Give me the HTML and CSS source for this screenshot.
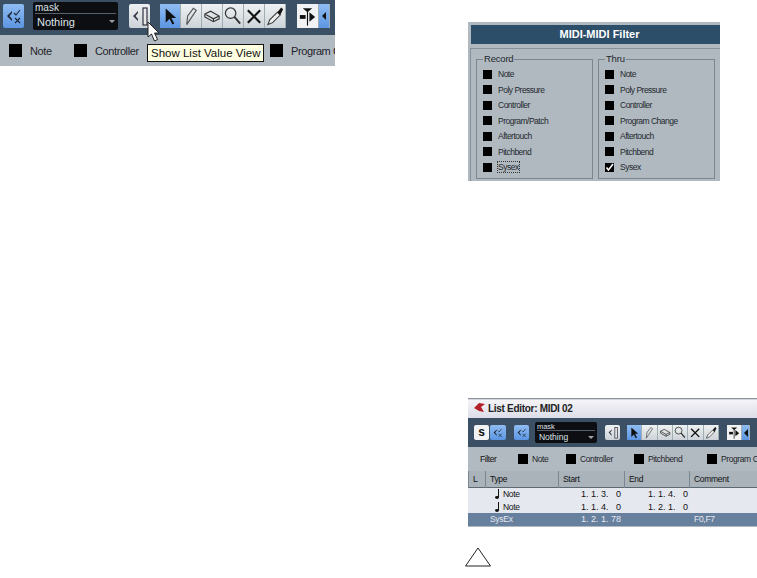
FILE: index.html
```html
<!DOCTYPE html>
<html lang="en">

<head>
    <meta charset="UTF-8">
    <meta name="viewport" content="width=device-width, initial-scale=1.0">
    <title>MIDI Filter</title>
    <link rel="stylesheet" href="styles.css">
</head>

<body>
    <svg class="defs" width="0" height="0">
        <symbol id="i-mute" viewBox="0 0 21 24">
            <path d="M9 7 L4 12 L9 17 L9 15 L6.5 12 L9 9 Z" fill="#1c2530" />
            <path d="M11 9 L13 11 L17 6 M12 14 L17 19 M17 14 L12 19" fill="none" stroke="#1c2530" stroke-width="1.1" />
        </symbol>
        <symbol id="i-list" viewBox="0 0 21 24">
            <path d="M9 7 L4 12 L9 17 L9 15 L6.5 12 L9 9 Z" fill="#334" />
            <rect x="14" y="4" width="4" height="17" fill="#e8e8e8" stroke="#334" stroke-width="1.2" />
        </symbol>
        <symbol id="i-arrow" viewBox="0 0 21 24">
            <path d="M6 4 L6 19 L10 15 L13 21 L15 20 L12 14 L17 14 Z" fill="#111" />
        </symbol>
        <symbol id="i-pencil" viewBox="0 0 21 24">
            <path d="M6 21 L7 12 L13 4 L16 6 L10 15 Z" fill="none" stroke="#555" stroke-width="1.2" />
        </symbol>
        <symbol id="i-erase" viewBox="0 0 21 24">
            <path d="M3 10 L9 7 L18 12 L18 15 L12 18 L3 13 Z M3 10 L12 15 L18 12 M12 15 L12 18" fill="none" stroke="#333" stroke-width="1.2" />
        </symbol>
        <symbol id="i-zoom" viewBox="0 0 21 24">
            <circle cx="8" cy="9" r="5.5" fill="none" stroke="#333" stroke-width="1.3" />
            <path d="M12 13 L18 20" stroke="#333" stroke-width="2" />
        </symbol>
        <symbol id="i-cross" viewBox="0 0 21 24">
            <path d="M4 6 L17 19 M17 6 L4 19" stroke="#111" stroke-width="2.2" />
        </symbol>
        <symbol id="i-drop" viewBox="0 0 21 24">
            <path d="M3 21 L5 16 L13 8 L16 11 L8 19 Z" fill="#eee" stroke="#333" stroke-width="1.1" />
            <path d="M13 8 L17 3 L19 5 L16 11 Z" fill="#111" />
        </symbol>
        <symbol id="i-split" viewBox="0 0 22 24">
            <path d="M6 4 L16 4 L11 8 Z" fill="#111" />
            <path d="M11 6 L11 22" stroke="#111" stroke-width="1.2" />
            <rect x="3" y="11" width="6" height="4" fill="#111" />
            <path d="M13 8 L19 13 L13 18 Z" fill="#111" />
        </symbol>
        <symbol id="i-note" viewBox="0 0 6 12">
            <path d="M4.5 1 L4.5 9" stroke="#111" stroke-width="1" />
            <ellipse cx="3" cy="9.5" rx="2" ry="1.4" fill="#111" />
        </symbol>
    </svg>

    <div class="page">
        <div class="col-left">
            <!-- Figure 1 -->
            <div class="fig-top">
                <div class="toolbar">
                    <div class="btn blue"><svg><use href="#i-mute" /></svg></div>
                    <div class="mask">
                        <div class="mask-title">mask</div>
                        <div class="mask-value">Nothing<span class="caret"></span></div>
                    </div>
                    <div class="btn light show"><svg><use href="#i-list" /></svg></div>
                    <div class="tools">
                        <div class="btn blue"><svg><use href="#i-arrow" /></svg></div>
                        <div class="btn light"><svg><use href="#i-pencil" /></svg></div>
                        <div class="btn light"><svg><use href="#i-erase" /></svg></div>
                        <div class="btn light"><svg><use href="#i-zoom" /></svg></div>
                        <div class="btn light"><svg><use href="#i-cross" /></svg></div>
                        <div class="btn light"><svg><use href="#i-drop" /></svg></div>
                    </div>
                    <div class="tools snap">
                        <div class="btn white"><svg><use href="#i-split" /></svg></div>
                        <div class="btn blue narrow"><span class="left-arrow"></span></div>
                    </div>
                </div>
                <div class="filter-row">
                    <span class="box"></span><span class="lbl note">Note</span>
                    <span class="box"></span><span class="lbl ctrl">Controller</span>
                    <span class="box"></span><span class="lbl">Program Change</span>
                </div>
                <div class="tooltip">Show List Value View</div>
                <svg class="cursor" width="13" height="22" viewBox="0 0 13 22">
                    <path d="M1 1 L1 16 L4.5 13 L7.5 20 L10.5 18.5 L7.5 12 L12 12 Z" fill="#fff" stroke="#222" stroke-width="1" />
                </svg>
            </div>
        </div>

        <div class="col-right">
            <!-- Figure 2 -->
            <div class="fig-filter">
                <div class="filter-title">MIDI-MIDI Filter</div>
                <div class="groups">
                    <fieldset class="group">
                        <legend>Record</legend>
                        <div class="opt"><span class="box"></span>Note</div>
                        <div class="opt"><span class="box"></span>Poly Pressure</div>
                        <div class="opt"><span class="box"></span>Controller</div>
                        <div class="opt"><span class="box"></span>Program/Patch</div>
                        <div class="opt"><span class="box"></span>Aftertouch</div>
                        <div class="opt"><span class="box"></span>Pitchbend</div>
                        <div class="opt"><span class="box"></span><span class="dotted">Sysex</span></div>
                    </fieldset>
                    <fieldset class="group">
                        <legend>Thru</legend>
                        <div class="opt"><span class="box"></span>Note</div>
                        <div class="opt"><span class="box"></span>Poly Pressure</div>
                        <div class="opt"><span class="box"></span>Controller</div>
                        <div class="opt"><span class="box"></span>Program Change</div>
                        <div class="opt"><span class="box"></span>Aftertouch</div>
                        <div class="opt"><span class="box"></span>Pitchbend</div>
                        <div class="opt">
                            <span class="box"><svg width="9" height="9" viewBox="0 0 9 9"><path d="M1.5 4.5 L3.5 7 L8 1" fill="none" stroke="#fff" stroke-width="1.6" /></svg></span>Sysex
                        </div>
                    </fieldset>
                </div>
            </div>

            <!-- Figure 3 -->
            <div class="fig-list">
                <div class="list-title">
                    <svg width="11" height="10" viewBox="0 0 11 10"><path d="M0 5 L5 0 L11 1 L7 4 L10 9 L5 8 Z" fill="#b3202a" /></svg>
                    List Editor: MIDI 02
                </div>
                <div class="toolbar small">
                    <div class="btn white s-btn">s</div>
                    <div class="btn blue"><svg><use href="#i-mute" /></svg></div>
                    <div class="btn blue second"><svg><use href="#i-mute" /></svg></div>
                    <div class="mask">
                        <div class="mask-title">mask</div>
                        <div class="mask-value">Nothing<span class="caret"></span></div>
                    </div>
                    <div class="btn light show"><svg><use href="#i-list" /></svg></div>
                    <div class="tools">
                        <div class="btn blue"><svg><use href="#i-arrow" /></svg></div>
                        <div class="btn light"><svg><use href="#i-pencil" /></svg></div>
                        <div class="btn light"><svg><use href="#i-erase" /></svg></div>
                        <div class="btn light"><svg><use href="#i-zoom" /></svg></div>
                        <div class="btn light"><svg><use href="#i-cross" /></svg></div>
                        <div class="btn light"><svg><use href="#i-drop" /></svg></div>
                    </div>
                    <div class="tools snap">
                        <div class="btn white"><svg><use href="#i-split" /></svg></div>
                        <div class="btn blue narrow"><span class="left-arrow"></span></div>
                    </div>
                </div>
                <div class="list-filter">
                    <span class="f-name">Filter</span>
                    <span class="box"></span><span class="lbl w-note">Note</span>
                    <span class="box"></span><span class="lbl w-ctrl">Controller</span>
                    <span class="box"></span><span class="lbl w-pitch">Pitchbend</span>
                    <span class="box"></span><span class="lbl">Program Change</span>
                </div>
                <div class="tbl">
                    <div class="tr th"><span>L</span><span>Type</span><span>Start</span><span>End</span><span>Comment</span></div>
                    <div class="tr"><span></span><span class="ty"><svg width="6" height="12"><use href="#i-note" /></svg>Note</span><span class="num">1. 1. 3.&nbsp;&nbsp;&nbsp;0</span><span class="num end">1. 1. 4.&nbsp;&nbsp;&nbsp;0</span><span></span></div>
                    <div class="tr"><span></span><span class="ty"><svg width="6" height="12"><use href="#i-note" /></svg>Note</span><span class="num">1. 1. 4.&nbsp;&nbsp;&nbsp;0</span><span class="num end">1. 2. 1.&nbsp;&nbsp;&nbsp;0</span><span></span></div>
                    <div class="tr sel"><span></span><span class="sysex">SysEx</span><span class="num">1. 2. 1. 78</span><span></span><span class="cmt">F0,F7</span></div>
                </div>
            </div>

            <svg class="warn" width="27" height="20" viewBox="0 0 27 20">
                <path d="M13 1 L25.5 19 L0.5 19 Z" fill="#fff" stroke="#222" stroke-width="1" />
            </svg>
        </div>
    </div>
</body>

</html>
```

FILE: styles.css
```css
body {
    margin: 0;
    background: #fff;
    font-family: "Liberation Sans", Arial, sans-serif;
    color: #111;
}

.defs {
    position: absolute;
}

.page {
    display: flex;
    width: 757px;
    height: 578px;
    overflow: hidden;
}

.col-left {
    width: 468px;
    flex: none;
}

.col-right {
    width: 289px;
    flex: none;
}

/* shared toolbar parts */
.toolbar {
    display: flex;
    align-items: center;
    height: 35px;
    background: #3c5065;
    box-sizing: border-box;
    padding: 0 0 4px 3px;
}

.btn {
    width: 21px;
    height: 24px;
    flex: none;
    box-sizing: border-box;
    border-radius: 2px;
}

.btn svg {
    display: block;
    width: 100%;
    height: 100%;
}

.blue {
    background: linear-gradient(#8fbdf2, #5c95e2);
}

.light {
    background: linear-gradient(#eef1f2, #ccd3d8);
}

.white {
    background: #f0f2f3;
}

.mask {
    width: 85px;
    height: 28px;
    margin-left: 9px;
    background: #0c0e12;
    border-radius: 2px;
    color: #dfe3e8;
    flex: none;
}

.mask-title {
    font-size: 10px;
    line-height: 10px;
    height: 10px;
    margin: 1px 2px 0;
    border-bottom: 1px solid #56626e;
}

.mask-value {
    display: flex;
    justify-content: space-between;
    align-items: center;
    font-size: 11px;
    line-height: 16px;
    padding: 0 3px 0 4px;
}

.caret {
    width: 0;
    height: 0;
    border: 3px solid transparent;
    border-top: 3px solid #9aa3ab;
    margin-top: 3px;
}

.show {
    margin-left: 11px;
}

.tools {
    display: flex;
    margin-left: 10px;
}

.tools .btn {
    border-radius: 0;
    border-right: 1px solid #a2acb3;
}

.snap {
    margin-left: 11px;
}

.snap .white {
    width: 22px;
}

.narrow {
    width: 11px !important;
    display: flex;
    align-items: center;
    justify-content: center;
}

.left-arrow {
    width: 0;
    height: 0;
    border: 4px solid transparent;
    border-right: 4px solid #111;
    border-left: 0;
}

.box {
    display: inline-block;
    width: 13px;
    height: 13px;
    background: #000;
    flex: none;
}

.lbl {
    color: #1e242a;
    flex: none;
}

/* figure 1 */
.fig-top {
    position: relative;
    width: 335px;
    height: 66px;
    overflow: hidden;
    background: #b2bac1;
}

.filter-row {
    display: flex;
    align-items: center;
    height: 31px;
    padding: 0 0 0 9px;
    font-size: 11px;
    letter-spacing: -0.4px;
    white-space: nowrap;
}

.filter-row .lbl {
    margin-left: 8px;
}

.filter-row .note {
    width: 44px;
}

.filter-row .ctrl {
    width: 175px;
}

.tooltip {
    position: absolute;
    left: 147px;
    top: 44px;
    width: 117px;
    height: 18px;
    box-sizing: border-box;
    background: #ffffe1;
    border: 1px solid #111;
    font-size: 11.5px;
    line-height: 16px;
    padding-left: 3px;
    white-space: nowrap;
}

.cursor {
    position: absolute;
    left: 147px;
    top: 21px;
}

/* figure 2 */
.fig-filter {
    width: 252px;
    height: 159px;
    margin: 22px 0 0 0;
    background: #b1b9c0;
    box-sizing: border-box;
    padding: 3px 0 0 3px;
}

.filter-title {
    height: 19px;
    line-height: 19px;
    background: #2c4e69;
    color: #fff;
    font-size: 11px;
    font-weight: bold;
    text-align: center;
    padding-left: 8px;
}

.groups {
    display: flex;
    gap: 5px;
    height: 133px;
    box-sizing: border-box;
    margin-top: 4px;
    padding: 4px 0 0 5px;
    border-top: 1px solid #87919a;
    border-left: 1px solid #87919a;
    margin-left: -1px;
}

.group {
    width: 117px;
    height: 126px;
    margin: 0;
    padding: 0 0 0 6px;
    box-sizing: border-box;
    border: 1px solid #7c868e;
    font-size: 8.5px;
    letter-spacing: -0.5px;
    color: #22282e;
}

.group legend {
    padding: 0 1px;
    margin-left: 0;
    font-size: 9.5px;
    letter-spacing: -0.2px;
    line-height: 12px;
}

.opt {
    display: flex;
    align-items: center;
    gap: 6px;
    height: 15.5px;
    white-space: nowrap;
}

.opt:first-of-type {
    margin-top: 1.5px;
}

.opt .box {
    width: 9px;
    height: 9px;
}

.opt .box svg {
    display: block;
}

.dotted {
    outline: 1px dotted #333;
}

/* figure 3 */
.fig-list {
    width: 289px;
    height: 129px;
    margin-top: 217px;
    background: #b2bac1;
    overflow: hidden;
}

.list-title {
    display: flex;
    align-items: center;
    gap: 3px;
    height: 20px;
    box-sizing: border-box;
    padding-left: 6px;
    background: linear-gradient(#6e7682 0, #f4f4f8 2px, #dcdde8);
    font-size: 10px;
    font-weight: bold;
    letter-spacing: -0.3px;
    color: #222;
}

.toolbar.small {
    height: 29px;
    padding: 0 0 0 6px;
    white-space: nowrap;
    width: 289px;
}

.small .btn {
    width: 15.3px;
    height: 15px;
}

.small .s-btn {
    font-size: 12px;
    font-weight: bold;
    text-align: center;
    line-height: 15px;
    margin-right: 1px;
}

.small .second {
    margin-left: 8px;
}

.small .mask {
    width: 62px;
    height: 21px;
    margin-left: 6px;
}

.small .mask-title {
    font-size: 7.5px;
    line-height: 7px;
    height: 7px;
    margin: 1px 2px 0;
}

.small .mask-value {
    font-size: 8.5px;
    line-height: 12px;
}

.small .show {
    margin-left: 8px;
}

.small .tools {
    margin-left: 7px;
}

.small .snap {
    margin-left: 8px;
}

.small .narrow {
    width: 8px !important;
}

.list-filter {
    display: flex;
    align-items: center;
    height: 24px;
    padding-left: 12px;
    font-size: 8.5px;
    letter-spacing: -0.4px;
    white-space: nowrap;
}

.list-filter .box {
    width: 10px;
    height: 10px;
}

.list-filter .lbl {
    margin-left: 4px;
}

.f-name {
    width: 38px;
    flex: none;
}

.w-note {
    width: 34px;
}

.w-ctrl {
    width: 54px;
}

.w-pitch {
    width: 59px;
}

.tbl {
    font-size: 8.5px;
    letter-spacing: -0.3px;
}

.tr {
    display: grid;
    grid-template-columns: 17px 73px 66px 65px 68px;
    height: 12.5px;
    line-height: 12.5px;
    background: #e6e8f0;
    white-space: nowrap;
}

.th {
    height: 17px;
    line-height: 17px;
    background: #aab3ba;
    border-bottom: 1px solid #5d6871;
    box-sizing: border-box;
}

.th span {
    border-left: 1px solid #7c868e;
    padding-left: 4px;
}

.ty {
    display: flex;
    align-items: center;
    gap: 3px;
    padding-left: 9px;
}

.num {
    text-align: right;
    font-size: 9px;
    letter-spacing: 0;
    padding-right: 3px;
}

.num.end {
    padding-right: 1px;
}

.sel {
    background: #66809e;
    color: #e6e8f0;
}

.sysex {
    padding-left: 5px;
}

.cmt {
    padding-left: 5px;
}

.warn {
    display: block;
    margin: 20px 0 0 -3px;
}
```
